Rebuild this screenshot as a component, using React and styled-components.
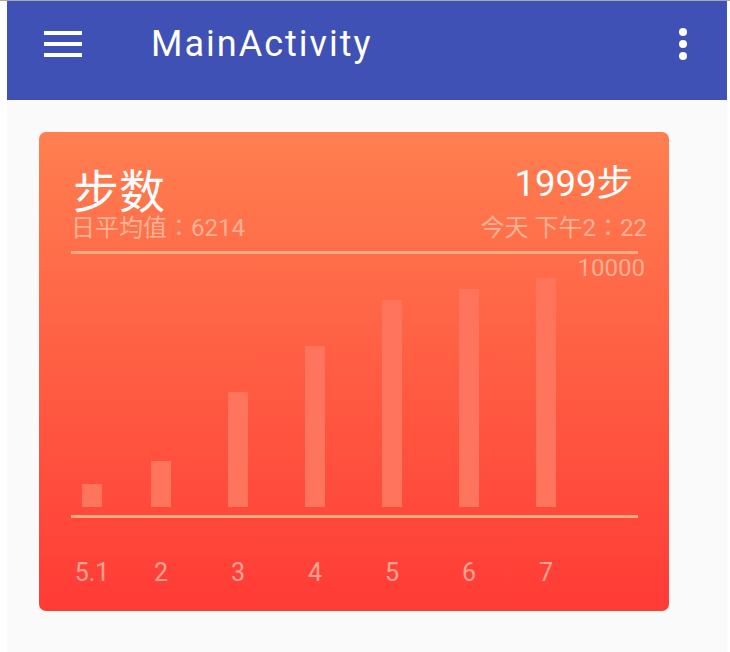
import React from "react";
import styled, { createGlobalStyle } from "styled-components";

const Global = createGlobalStyle`
  html, body { margin: 0; padding: 0; background: #ffffff; }
  body { font-family: Roboto, "Noto Sans CJK TC", sans-serif; }
`;

const Page = styled.div`
  border-top: 1px solid #a8a8a8;
  padding: 0 3px 0 7px;
  background: #ffffff;
`;

const Screen = styled.div`
  width: 720px;
  height: 651px;
  background: #fafafa;
  display: flex;
  flex-direction: column;
`;

const AppBar = styled.header`
  height: 99px;
  box-sizing: border-box;
  background: #3f51b5;
  display: flex;
  align-items: center;
  padding: 0 40px 13px 37px;
`;

const Hamburger = styled.div`
  display: flex;
  flex-direction: column;
  gap: 7px;
  span {
    display: block;
    width: 38px;
    height: 4px;
    background: #ffffff;
  }
`;

const Title = styled.h1`
  margin: 0 0 0 69px;
  font-family: Roboto, sans-serif;
  font-weight: 400;
  font-size: 36px;
  line-height: 36px;
  letter-spacing: 2px;
  color: #ffffff;
`;

const Overflow = styled.div`
  margin-left: auto;
  display: flex;
  flex-direction: column;
  gap: 4px;
  span {
    display: block;
    width: 8px;
    height: 8px;
    border-radius: 50%;
    background: #ffffff;
  }
`;

const Card = styled.section`
  margin: 32px 0 0 32px;
  width: 630px;
  height: 479px;
  box-sizing: border-box;
  border-radius: 7px;
  background: linear-gradient(180deg, #ff7f50 0%, #ff3b36 100%);
  padding: 0 0 0 32px;
  display: flex;
  flex-direction: column;
`;

const TitleRow = styled.div`
  margin-top: 34px;
  display: flex;
  justify-content: space-between;
  align-items: flex-start;
`;

const Heading = styled.div`
  margin: 4px 0 0 2px;
  font-family: Roboto, "Noto Sans CJK TC", sans-serif;
  font-size: 46px;
  line-height: 44px;
  color: #ffffff;
`;

const Total = styled.div`
  margin-right: 36px;
  font-family: Roboto, "Noto Sans CJK TC", sans-serif;
  font-size: 36.5px;
  line-height: 36px;
  color: #ffffff;
`;

const SubRow = styled.div`
  margin-top: 2px;
  display: flex;
  justify-content: space-between;
  font-family: Roboto, "Noto Sans CJK TC", sans-serif;
  font-size: 24px;
  line-height: 24px;
  color: rgba(255, 228, 208, 0.58);
  padding-right: 22px;
`;

const Rule = styled.div`
  width: 567px;
  height: 3px;
  background: #ffad84;
  margin-top: ${(p) => p.$top}px;
`;

const MaxLabel = styled.div`
  margin-top: 4px;
  align-self: flex-end;
  padding-right: 24px;
  font-family: Roboto, sans-serif;
  font-size: 24px;
  line-height: 20px;
  color: rgba(255, 228, 208, 0.58);
`;

const Bars = styled.div`
  height: 229px;
  display: flex;
  align-items: flex-end;
`;

const Bar = styled.div`
  width: 20px;
  margin-left: ${(p) => p.$gap}px;
  background: #ff745c;
`;

const Labels = styled.div`
  margin-top: 42px;
  display: flex;
`;

const Label = styled.div`
  width: 20px;
  margin-left: ${(p) => p.$gap}px;
  display: flex;
  justify-content: center;
  white-space: nowrap;
  font-family: Roboto, sans-serif;
  font-size: 25px;
  line-height: 25px;
  color: rgba(255, 228, 208, 0.62);
`;

const data = [
  { label: "5.1", value: 23, gap: 11 },
  { label: "2", value: 46, gap: 49 },
  { label: "3", value: 115, gap: 57 },
  { label: "4", value: 161, gap: 57 },
  { label: "5", value: 207, gap: 57 },
  { label: "6", value: 218, gap: 57 },
  { label: "7", value: 229, gap: 57 },
];

export default function App() {
  return (
    <>
      <Global />
      <Page>
        <Screen>
          <AppBar>
            <Hamburger>
              <span />
              <span />
              <span />
            </Hamburger>
            <Title>MainActivity</Title>
            <Overflow>
              <span />
              <span />
              <span />
            </Overflow>
          </AppBar>
          <Card>
            <TitleRow>
              <Heading>步数</Heading>
              <Total>1999步</Total>
            </TitleRow>
            <SubRow>
              <span>日平均值：6214</span>
              <span>今天 下午2：22</span>
            </SubRow>
            <Rule $top={11} />
            <MaxLabel>10000</MaxLabel>
            <Bars>
              {data.map((d) => (
                <Bar key={d.label} $gap={d.gap} style={{ height: d.value }} />
              ))}
            </Bars>
            <Rule $top={8} />
            <Labels>
              {data.map((d) => (
                <Label key={d.label} $gap={d.gap}>
                  {d.label}
                </Label>
              ))}
            </Labels>
          </Card>
        </Screen>
      </Page>
    </>
  );
}
